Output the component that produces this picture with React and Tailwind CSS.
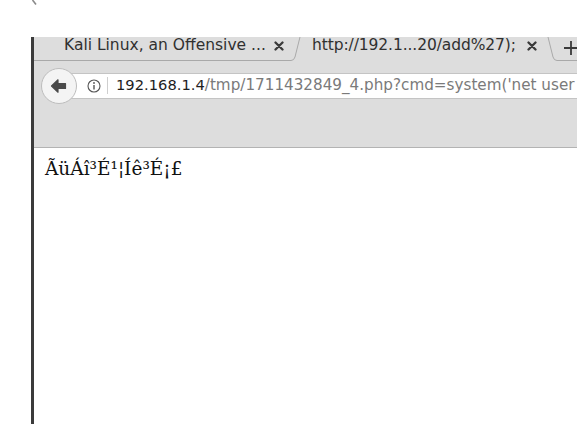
import React from "react";

function CloseX({ className = "" }) {
  return (
    <svg width="10" height="10" viewBox="0 0 10 10" className={className}>
      <path d="M1.5 1.5 L8.5 8.5 M8.5 1.5 L1.5 8.5" stroke="#3a3a3a" strokeWidth="2.3" strokeLinecap="round" />
    </svg>
  );
}

export default function App() {
  const sans = { fontFamily: '"DejaVu Sans", sans-serif' };
  return (
    <div className="relative w-[577px] h-[424px] bg-white overflow-hidden flex flex-col">
      <svg className="absolute top-0 left-[31px]" width="8" height="6" viewBox="0 0 8 6">
        <path d="M1.5 0 L5 4.5" stroke="#8a8a8a" strokeWidth="1.6" />
      </svg>
      <div className="h-[37px] shrink-0" />
      <div className="flex-1 ml-[31px] border-l-[3px] border-[#3b3b3b] flex flex-col min-h-0">
        {/* tab strip */}
        <div className="h-[24px] shrink-0 bg-[#dddddd] flex items-stretch text-[#303030]" style={sans}>
          <div className="w-[254px] shrink-0 border-b border-[#a9a9a9] flex items-start pl-[30px] pr-[4px]">
            <span className="text-[15.5px] leading-[18px] -mt-[1px] whitespace-nowrap">Kali Linux, an Offensive ...</span>
            <CloseX className="ml-auto mt-[4px]" />
          </div>
          <svg width="14" height="24" viewBox="0 0 14 24" className="shrink-0">
            <path d="M0 23.5 H3 Q6 23.5 7 20 L12 0" stroke="#a9a9a9" strokeWidth="1" fill="none" />
          </svg>
          <div className="w-[242px] shrink-0 flex items-start pl-[10px] pr-[7px]">
            <span className="text-[15.5px] leading-[18px] -mt-[1px] whitespace-nowrap tracking-[-0.1px]">http://192.1...20/add%27);</span>
            <CloseX className="ml-auto mt-[4px]" />
          </div>
          <svg width="16" height="24" viewBox="0 0 16 24" className="shrink-0">
            <path d="M4 0 L9 20 Q10 23.5 13 23.5 H16" stroke="#a9a9a9" strokeWidth="1" fill="none" />
          </svg>
          <div className="flex-1 border-b border-[#a9a9a9] flex items-start pl-[3px] pt-[3px]">
            <svg width="16" height="16" viewBox="0 0 16 16">
              <path d="M8 1 V15 M1 8 H15" stroke="#3a3a3a" strokeWidth="1.8" />
            </svg>
          </div>
        </div>
        {/* nav bar */}
        <div className="h-[87px] shrink-0 bg-[#dddddd] border-b border-[#b3b3b3]">
          <div className="mt-[6px] h-[37px] flex items-center">
            <div className="relative z-10 ml-[7px] w-[36px] h-[36px] shrink-0 rounded-full bg-[#f4f4f4] border border-[#bdbdbd] flex items-center justify-center">
              <svg width="18" height="16" viewBox="0 0 18 16">
                <path d="M1.5 8 L8 1.8 L8 5.5 L15.5 5.5 L15.5 10.5 L8 10.5 L8 14.2 Z" fill="#4a4a4a" stroke="#4a4a4a" strokeWidth="1.2" strokeLinejoin="round" />
              </svg>
            </div>
            <div className="-ml-[18px] flex-1 h-[26px] bg-white border-y border-[#c4c4c4] flex items-center pl-[28px] overflow-hidden" style={sans}>
              <svg width="14" height="14" viewBox="0 0 14 14" className="shrink-0">
                <circle cx="7" cy="7" r="6" stroke="#555" strokeWidth="1.1" fill="none" />
                <circle cx="7" cy="4" r="0.9" fill="#555" />
                <path d="M7 6 V10.5" stroke="#555" strokeWidth="1.4" />
              </svg>
              <div className="ml-[6px] w-px h-[17px] bg-[#cfcfcf] shrink-0" />
              <span className="ml-[8px] text-[14.7px] whitespace-nowrap text-[#1e1e1e]">
                192.168.1.4<span className="text-[15.2px] text-[#7a7a7a]">/tmp/1711432849_4.php?cmd=system('net user</span>
              </span>
            </div>
          </div>
        </div>
        {/* content */}
        <div className="flex-1 bg-white pl-[11px] pt-[10px]">
          <p className="text-[18.5px] leading-[22px] text-[#111]" style={{ fontFamily: '"DejaVu Serif", serif' }}>
            ÃüÁî³É¹¦Íê³É¡£
          </p>
        </div>
      </div>
    </div>
  );
}
